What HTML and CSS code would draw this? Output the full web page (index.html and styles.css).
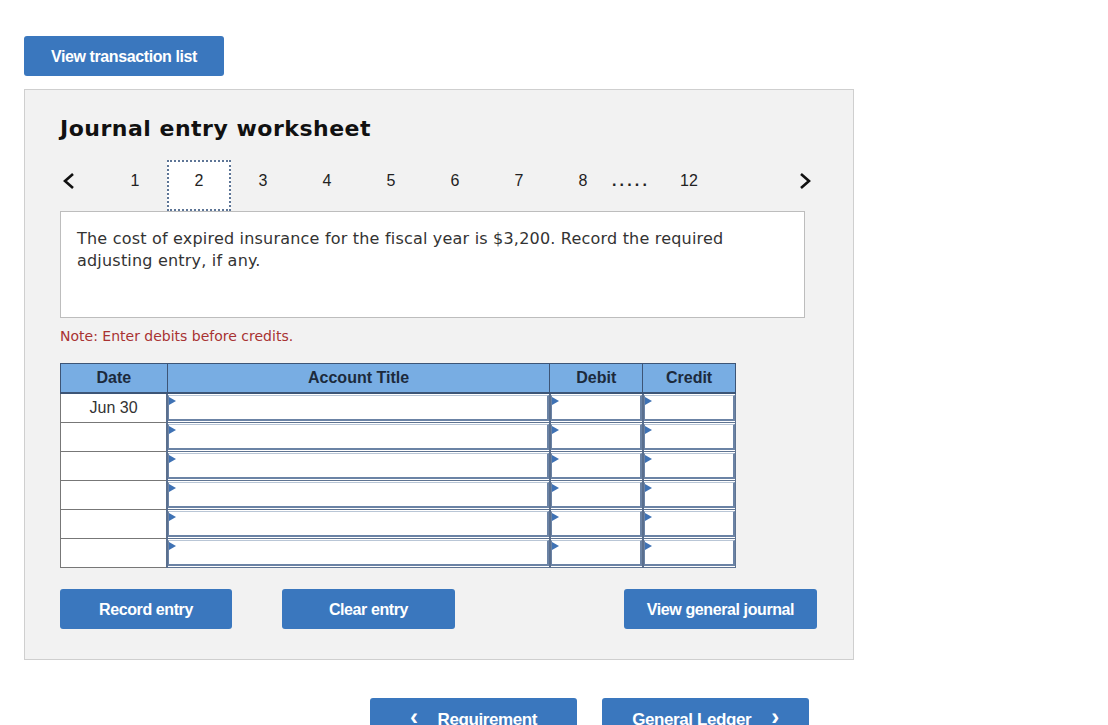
FILE: index.html
```html
<!DOCTYPE html>
<html lang="en">
<head>
    <meta charset="UTF-8">
    <title>Journal entry worksheet</title>
    <link rel="stylesheet" href="styles.css">
</head>
<body>
    <div class="page">
        <button class="btn btn_top">View transaction list</button>

        <div class="panel">
            <h2 class="title">Journal entry worksheet</h2>

            <div class="pager">
                <span class="pager_arrow">
                    <svg width="14" height="18" viewBox="0 0 14 18"><polyline points="11,2 3,9 11,16" fill="none" stroke="#111" stroke-width="2.6"/></svg>
                </span>
                <span class="pager_num">1</span>
                <span class="pager_num current">2</span>
                <span class="pager_num">3</span>
                <span class="pager_num">4</span>
                <span class="pager_num">5</span>
                <span class="pager_num">6</span>
                <span class="pager_num">7</span>
                <span class="pager_num">8</span>
                <span class="pager_dots">.....</span>
                <span class="pager_num">12</span>
                <span class="pager_arrow next">
                    <svg width="14" height="18" viewBox="0 0 14 18"><polyline points="3,2 11,9 3,16" fill="none" stroke="#111" stroke-width="2.6"/></svg>
                </span>
            </div>

            <div class="question">
                The cost of expired insurance for the fiscal year is $3,200. Record the required adjusting entry, if any.
            </div>

            <div class="note">Note: Enter debits before credits.</div>

            <table class="journal">
                <thead>
                    <tr>
                        <th class="c_date">Date</th>
                        <th class="c_title">Account Title</th>
                        <th class="c_debit">Debit</th>
                        <th class="c_credit">Credit</th>
                    </tr>
                </thead>
                <tbody>
                    <tr>
                        <td class="date">Jun 30</td>
                        <td class="inp"><div class="field"></div></td>
                        <td class="inp"><div class="field"></div></td>
                        <td class="inp"><div class="field"></div></td>
                    </tr>
                    <tr>
                        <td class="date"></td>
                        <td class="inp"><div class="field"></div></td>
                        <td class="inp"><div class="field"></div></td>
                        <td class="inp"><div class="field"></div></td>
                    </tr>
                    <tr>
                        <td class="date"></td>
                        <td class="inp"><div class="field"></div></td>
                        <td class="inp"><div class="field"></div></td>
                        <td class="inp"><div class="field"></div></td>
                    </tr>
                    <tr>
                        <td class="date"></td>
                        <td class="inp"><div class="field"></div></td>
                        <td class="inp"><div class="field"></div></td>
                        <td class="inp"><div class="field"></div></td>
                    </tr>
                    <tr>
                        <td class="date"></td>
                        <td class="inp"><div class="field"></div></td>
                        <td class="inp"><div class="field"></div></td>
                        <td class="inp"><div class="field"></div></td>
                    </tr>
                    <tr>
                        <td class="date"></td>
                        <td class="inp"><div class="field"></div></td>
                        <td class="inp"><div class="field"></div></td>
                        <td class="inp"><div class="field"></div></td>
                    </tr>
                </tbody>
            </table>

            <div class="actions">
                <button class="btn btn_record">Record entry</button>
                <button class="btn btn_clear">Clear entry</button>
                <button class="btn btn_journal">View general journal</button>
            </div>
        </div>

        <div class="bottom_nav">
            <button class="btn btn_nav"><span class="chev">&lsaquo;</span>Requirement</button>
            <button class="btn btn_nav">General Ledger<span class="chev right">&rsaquo;</span></button>
        </div>
    </div>
</body>
</html>
```

FILE: styles.css
```css
body{
    margin: 0;
    padding: 0;
    background: #fff;
    font-family: "Liberation Sans", Arial, sans-serif;
    color: #333;
}
.page{
    padding: 36px 0 40px 24px;
}
.btn{
    display: block;
    border: 0;
    border-radius: 3px;
    background-color: #3a77be;
    color: #fff;
    font-family: "Liberation Sans", Arial, sans-serif;
    font-size: 16px;
    font-weight: bold;
    letter-spacing: -0.4px;
    height: 40px;
    line-height: 42px;
    padding: 0;
    cursor: pointer;
}
.btn_top{
    width: 200px;
}

/* 面板 */
.panel{
    margin-top: 13px;
    height: 569px;
    width: 793px;
    background-color: #f2f2f2;
    border: 1px solid #cfcfcf;
    padding-left: 35px;
}
.title{
    margin: 0;
    padding-top: 25px;
    font-family: "DejaVu Sans", Verdana, sans-serif;
    font-size: 22px;
    line-height: 28px;
    font-weight: bold;
    color: #111;
    letter-spacing: 0.5px;
}

/* 分页 */
.pager{
    margin-top: 17px;
    width: 745px;
    height: 51px;
    display: flex;
    align-items: flex-start;
    font-size: 16px;
    color: #222;
}
.pager_arrow{
    width: 43px;
    display: flex;
    align-items: center;
    height: 41px;
    padding-left: 2px;
    box-sizing: border-box;
}
.pager_arrow.next{
    width: 20px;
    margin-left: auto;
    padding-left: 0;
    margin-right: -13px;
}
.pager_num{
    width: 64px;
    height: 51px;
    line-height: 41px;
    text-align: center;
    box-sizing: border-box;
}
.pager_num.current{
    background-color: #fff;
    border: 2px dotted #5d7596;
    line-height: 37px;
}
.pager_dots{
    width: 52px;
    margin-left: -10px;
    font-weight: bold;
    letter-spacing: 3.2px;
    text-align: center;
    line-height: 41px;
}

.question{
    width: 745px;
    height: 107px;
    box-sizing: border-box;
    background-color: #fff;
    border: 1px solid #bdbdbd;
    padding: 16px 70px 0 16px;
    font-family: "DejaVu Sans", Verdana, sans-serif;
    font-size: 16px;
    letter-spacing: 0.2px;
    line-height: 22px;
    color: #333;
}
.note{
    margin-top: 9px;
    font-family: "DejaVu Sans", Verdana, sans-serif;
    font-size: 14px;
    line-height: 18px;
    color: #a83232;
}

/* 分录表格 */
.journal{
    margin-top: 18px;
    border-collapse: collapse;
    width: 676px;
    font-size: 16px;
}
.journal th{
    height: 28px;
    background-color: #78ade3;
    color: #1c2a3c;
    font-weight: bold;
    border: 1px solid #3d5576;
    border-bottom: 2px solid #3d5576;
    padding: 0;
}
.c_date{ width: 106px; }
.c_title{ width: 383px; }
.c_debit{ width: 92px; }
.c_credit{ width: 92px; }
.journal td{
    height: 29px;
    padding: 0;
    box-sizing: border-box;
}
.journal td.date{
    background-color: #fff;
    border: 1px solid #777;
    text-align: center;
    color: #333;
    vertical-align: top;
    padding-top: 5px;
}
.journal td.inp{
    border: 1px solid #5f7492;
    border-left: 2px solid #5a6f8e;
    background-color: #fff;
    padding: 1px 0 0 0;
    vertical-align: top;
}
.field{
    position: relative;
    height: 23px;
    background-color: #fff;
    border-left: 1px solid #6b83a5;
    border-right: 2px solid #6b83a5;
    border-bottom: 2px solid #6b83a5;
    border-top: 1px solid #b9c6d6;
}
.field::before{
    content: "";
    position: absolute;
    left: 0;
    top: 1px;
    border-top: 4px solid transparent;
    border-bottom: 4px solid transparent;
    border-left: 7px solid #3f72b4;
}

.actions{
    margin-top: 21px;
    display: flex;
}
.btn_record{ width: 172px; }
.btn_clear{ width: 173px; margin-left: 50px; }
.btn_journal{ width: 193px; margin-left: 169px; }

.bottom_nav{
    margin-top: 38px;
    margin-left: 346px;
    display: flex;
    gap: 25px;
}
.btn_nav{
    width: 207px;
    font-size: 17px;
    line-height: 38px;
}
.chev{
    font-size: 24px;
    margin-right: 20px;
}
.chev.right{
    margin-right: 0;
    margin-left: 20px;
}
```
